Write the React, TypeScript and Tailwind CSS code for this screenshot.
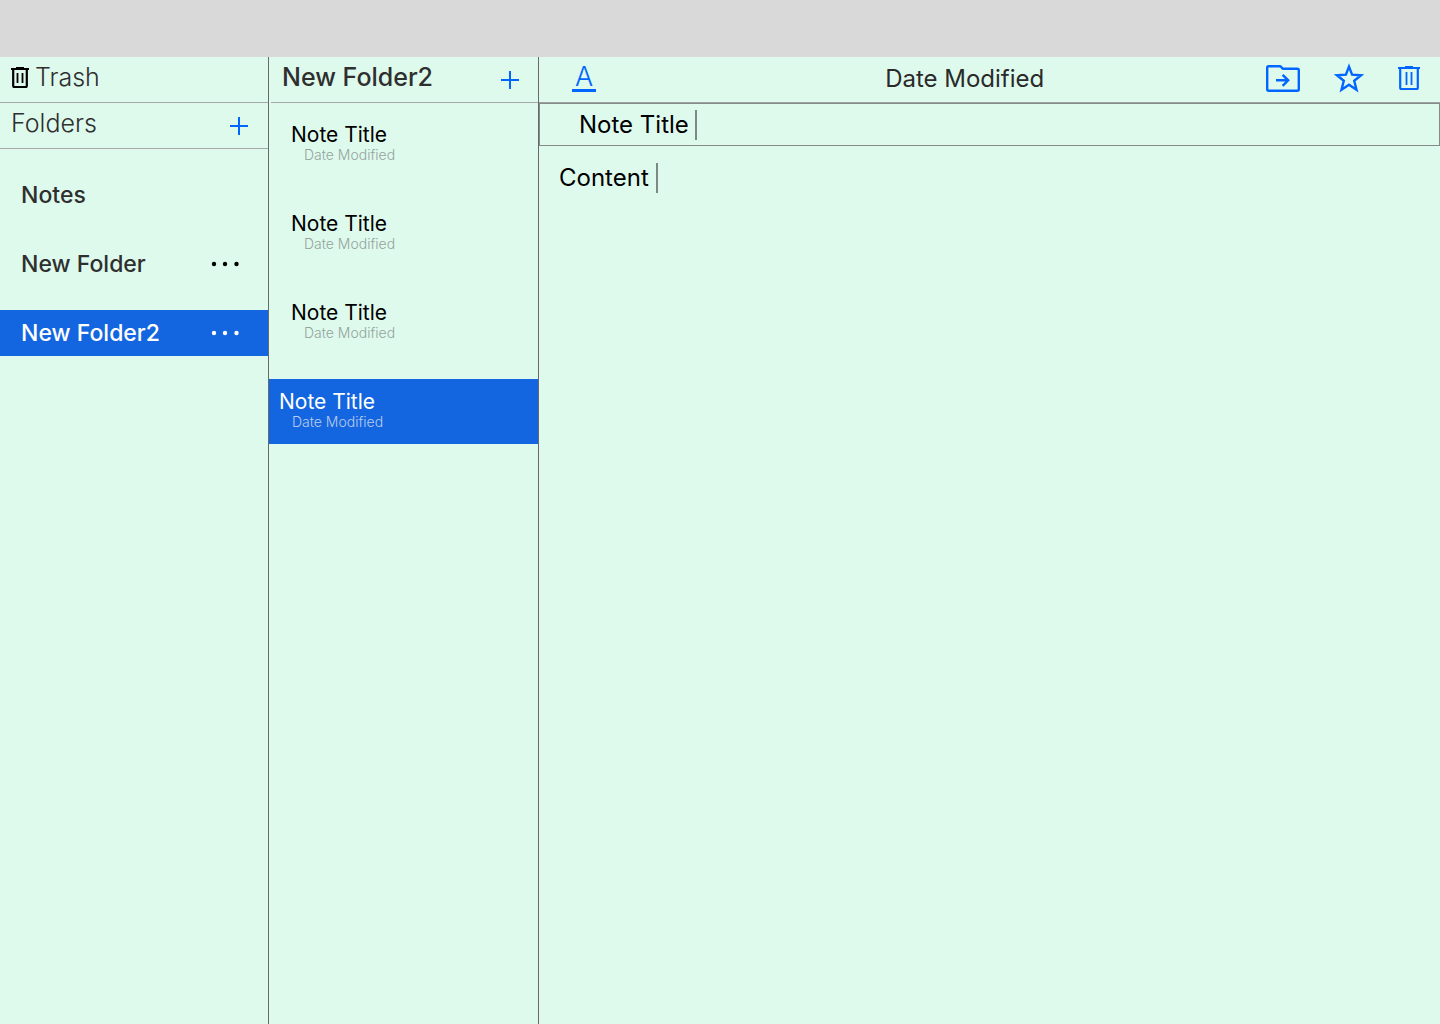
import { useState } from 'react';

type Folder = { name: string; hasMenu: boolean };
type Note = { id: number; title: string; date: string };

const folders: Folder[] = [
  { name: 'Notes', hasMenu: false },
  { name: 'New Folder', hasMenu: true },
  { name: 'New Folder2', hasMenu: true },
];

const initialNotes: Note[] = [1, 2, 3, 4].map((id) => ({
  id,
  title: 'Note Title',
  date: 'Date Modified',
}));

function PlusIcon() {
  return (
    <svg width="18" height="18" viewBox="0 0 18 18" fill="none" stroke="#0066ff" strokeWidth="2" aria-hidden="true">
      <path d="M9 0v18M0 9h18" />
    </svg>
  );
}

function TrashIcon({ width, height }: { width: number; height: number }) {
  return (
    <svg
      width={width}
      height={height}
      viewBox={`0 0 ${width} ${height}`}
      fill="none"
      stroke="currentColor"
      strokeWidth="2"
      aria-hidden="true"
    >
      <path d={`M0 2H${width}M${width / 2 - 4} 1h8`} />
      <path d={`M2.2 2V${height - 2}q0 1 1 1H${width - 3.2}q1 0 1 -1V2`} strokeWidth="2.2" />
      <path d={`M${width / 2 - 2.5} 6V${height - 5}M${width / 2 + 2.5} 6V${height - 5}`} strokeWidth="1.8" />
    </svg>
  );
}

function MoveIcon() {
  return (
    <svg width="34" height="27" viewBox="0 0 34 27" fill="none" stroke="currentColor" strokeWidth="2.4" aria-hidden="true">
      <path
        d="M2.7 1.2H14q.6 0 1 .5l1.3 1.6q.4.4 1 .4H31.3q1.5 0 1.5 1.5V24.3q0 1.5-1.5 1.5H2.7q-1.5 0-1.5-1.5V2.7q0-1.5 1.5-1.5z"
        strokeLinejoin="round"
      />
      <path d="M10 15.3h12M16.6 9.8l5.6 5.5-5.6 5.5" />
    </svg>
  );
}

function StarIcon() {
  return (
    <svg width="30" height="30" viewBox="0 0 30 30" fill="none" stroke="currentColor" strokeWidth="2.4" aria-hidden="true">
      <path d="M15 3.6l3.1 8 9 .6-6.9 5.6 2.3 8.9L15 21.8l-7.5 4.9 2.3-8.9-6.9-5.6 9-.6z" />
    </svg>
  );
}

function DotsIcon() {
  return (
    <svg width="28" height="6" viewBox="0 0 28 6" fill="currentColor" aria-hidden="true">
      <circle cx="3" cy="3" r="2.2" />
      <circle cx="14" cy="3" r="2.2" />
      <circle cx="25.5" cy="3" r="2.2" />
    </svg>
  );
}

function Caret() {
  return <span className="h-[30px] w-0.5 bg-[#7b8a84]" aria-hidden="true" />;
}

export default function App() {
  const [folder, setFolder] = useState('New Folder2');
  const [noteId, setNoteId] = useState(4);
  const [title, setTitle] = useState('Note Title');
  const [content, setContent] = useState('Content');

  return (
    <div className="flex min-h-screen flex-col bg-[#defaed] font-['Inter',sans-serif] text-[#2f2f2f]">
      <header className="h-[57px] bg-[#d9d9d9]" />
      <div className="flex flex-1">
        <nav className="w-[269px] shrink-0 border-r border-[#696969]" aria-label="Folders">
          <button type="button" className="flex h-[46px] w-full items-center gap-1.5 border-b border-[#a8a8a8] pb-1 pl-[11px] text-[25px] font-light">
            <span className="text-black">
              <TrashIcon width={18} height={21} />
            </span>
            Trash
          </button>
          <div className="flex h-[46px] items-center justify-between border-b border-[#a8a8a8] pr-5 pl-[11px]">
            <h2 className="pb-1 text-[25px] font-light">Folders</h2>
            <button type="button" aria-label="Add folder">
              <PlusIcon />
            </button>
          </div>
          <ul className="flex flex-col gap-[23px] pt-[23px]">
            {folders.map((f) => (
              <li
                key={f.name}
                className={
                  f.name === folder
                    ? 'flex h-[46px] items-center justify-between bg-[#1466e0] pr-[29px] pl-[21px] text-white'
                    : 'flex h-[46px] items-center justify-between pr-[29px] pl-[21px]'
                }
              >
                <button type="button" className="text-[23px] font-medium" onClick={() => setFolder(f.name)}>
                  {f.name}
                </button>
                {f.hasMenu && (
                  <button
                    type="button"
                    aria-label={`${f.name} options`}
                    className={f.name === folder ? 'text-white' : 'text-black'}
                  >
                    <DotsIcon />
                  </button>
                )}
              </li>
            ))}
          </ul>
        </nav>

        <section className="w-[270px] shrink-0 border-r border-[#696969]" aria-label="Notes in folder">
          <div className="ml-0.5 flex h-[46px] items-center justify-between border-b border-[#a8a8a8] pr-[19px] pl-[11px]">
            <h2 className="pb-1 text-[25px] font-medium">{folder}</h2>
            <button type="button" aria-label="Add note">
              <PlusIcon />
            </button>
          </div>
          <ul className="flex flex-col gap-6 pt-[9px]">
            {initialNotes.map((n) => (
              <li key={n.id}>
                <button
                  type="button"
                  onClick={() => setNoteId(n.id)}
                  className={
                    n.id === noteId
                      ? 'flex h-[65px] w-full flex-col bg-[#1466e0] pt-[11px] pl-2.5 text-left text-white'
                      : 'flex h-[65px] w-full flex-col pt-[11px] pl-[22px] text-left text-black'
                  }
                >
                  <span className="text-[21px]/6">{n.title}</span>
                  <span
                    className={
                      n.id === noteId
                        ? 'pl-[13px] text-sm/4 font-light text-[#b9cdee]'
                        : 'pl-[13px] text-sm/4 font-light text-[#94a39c]'
                    }
                  >
                    {n.date}
                  </span>
                </button>
              </li>
            ))}
          </ul>
        </section>

        <main className="flex min-w-0 flex-1 flex-col">
          <div className="grid h-[46px] grid-cols-[5fr_auto_6fr] items-center border-b border-[#a0a0a0] pr-5 pb-0.5 pl-[33px] text-[#0066ff]">
            <button
              type="button"
              aria-label="Text format"
              className="w-6 justify-self-start border-b-3 border-[#0066ff] text-center text-[27px]/[24px] font-light"
            >
              A
            </button>
            <span className="text-2xl text-[#2a2a2a]">Date Modified</span>
            <div className="flex items-center justify-end">
              <button type="button" aria-label="Move to folder" className="mr-[34px]">
                <MoveIcon />
              </button>
              <button type="button" aria-label="Favourite" className="mr-[34px] pb-0.5">
                <StarIcon />
              </button>
              <button type="button" aria-label="Delete note" className="pb-0.5">
                <TrashIcon width={22} height={24} />
              </button>
            </div>
          </div>
          <div className="flex h-[43px] items-center gap-1.5 border border-[#858c88] pl-[39px] text-black">
            <input
              aria-label="Note title"
              value={title}
              onChange={(e) => setTitle(e.target.value)}
              className="field-sizing-content bg-transparent text-2xl outline-none"
            />
            <Caret />
          </div>
          <div className="flex items-center gap-[7px] pt-4 pl-5 text-black">
            <textarea
              aria-label="Note content"
              rows={1}
              value={content}
              onChange={(e) => setContent(e.target.value)}
              className="field-sizing-content resize-none bg-transparent text-2xl outline-none"
            />
            <Caret />
          </div>
        </main>
      </div>
    </div>
  );
}
